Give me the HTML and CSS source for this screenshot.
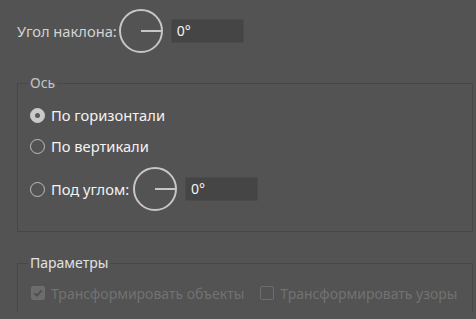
FILE: index.html
```html
<html lang="ru">
    <head>
        <meta charset="utf-8"/>
        <title>Зеркальное отражение</title>
        <link rel="stylesheet" href="styles.css">
    </head>

    <body>
        <div class="row top-row">
            <span class="label">Угол наклона:</span>
            <svg class="dial" width="44" height="44" viewBox="0 0 44 44">
                <circle cx="22" cy="22" r="21" fill="none" stroke="#c6c6c6" stroke-width="2"/>
                <line x1="22" y1="22" x2="43" y2="22" stroke="#c6c6c6" stroke-width="2"/>
            </svg>
            <div class="field">0°</div>
        </div>

        <fieldset class="group axis">
            <legend>Ось</legend>
            <div class="row opt">
                <span class="radio checked"></span>
                <span class="opt-text">По горизонтали</span>
            </div>
            <div class="row opt">
                <span class="radio"></span>
                <span class="opt-text">По вертикали</span>
            </div>
            <div class="row opt angle">
                <span class="radio"></span>
                <span class="opt-text">Под углом:</span>
                <svg class="dial" width="44" height="44" viewBox="0 0 44 44">
                    <circle cx="22" cy="22" r="21" fill="none" stroke="#c6c6c6" stroke-width="2"/>
                    <line x1="22" y1="22" x2="43" y2="22" stroke="#c6c6c6" stroke-width="2"/>
                </svg>
                <div class="field">0°</div>
            </div>
        </fieldset>

        <fieldset class="group params">
            <legend>Параметры</legend>
            <div class="row opt disabled">
                <span class="check checked">
                    <svg width="10" height="10" viewBox="0 0 10 10">
                        <path d="M1.5 5.2 L4 7.6 L8.6 2.4" fill="none" stroke="#4f4f4f" stroke-width="2"/>
                    </svg>
                </span>
                <span class="opt-text">Трансформировать объекты</span>
                <span class="check"></span>
                <span class="opt-text">Трансформировать узоры</span>
            </div>
        </fieldset>
    </body>
</html>
```

FILE: styles.css
```css
html, body { margin: 0; padding: 0; }
body {
    background-color: #535353;
    font-family: "Noto Sans", "Liberation Sans", sans-serif;
    font-size: 14px;
    color: #d2d2d2;
    width: 476px; height: 319px; overflow: hidden;
}
.row { display: flex; align-items: center; }
.top-row { margin: 9px 0 0 17px; height: 44px; }
.label { margin-right: 2px; font-size: 14.7px; }
.dial { display: block; }
.field {
    width: 66px; height: 22px; margin-left: 8px;
    background-color: #454545; border: 1px solid #4b4b4b; border-radius: 2px;
    color: #f4f4f4; line-height: 22px; padding-left: 5px;
}

.group {
    margin: 0 0 0 17px; width: 456px; box-sizing: border-box;
    border: 1px solid #474747; padding: 0 0 0 12px;
}
.group legend { padding: 0 2px; margin-left: -2px; line-height: 16px; }
.axis { margin-top: 22px; height: 157px; }
.axis legend { color: #c4c4c4; }
.params { margin-top: 23px; height: 57px; border-bottom: 0; }
.params legend { color: #e2e2e2; }

.opt { color: #f2f2f2; }
.axis .opt-text { font-size: 14.7px; }
.axis .opt:nth-of-type(1) { margin-top: 16px; height: 16px; }
.axis .opt:nth-of-type(2) { margin-top: 15px; height: 16px; }
.axis .angle { margin-top: 13px; height: 44px; }
.opt-text { margin-left: 6px; }
.angle .opt-text { margin-right: 4px; }
.angle .field { margin-left: 8px; }

.radio {
    width: 13px; height: 13px; border: 1.5px solid #bdbdbd; border-radius: 50%;
    display: flex; align-items: center; justify-content: center;
}
.radio.checked { background-color: #cacaca; border-color: #cacaca; }
.radio.checked::after {
    content: ""; width: 5px; height: 5px; border-radius: 50%; background-color: #5a5a5a;
}

.disabled { color: #727272; margin-top: 14px; height: 16px; }
.check {
    width: 12px; height: 12px; border: 1px solid #6e6e6e; border-radius: 2px;
    display: flex; align-items: center; justify-content: center; margin-left: 1px;
}
.check.checked { background-color: #6c6c6c; }
.check + .opt-text + .check { margin-left: 16px; }
```
